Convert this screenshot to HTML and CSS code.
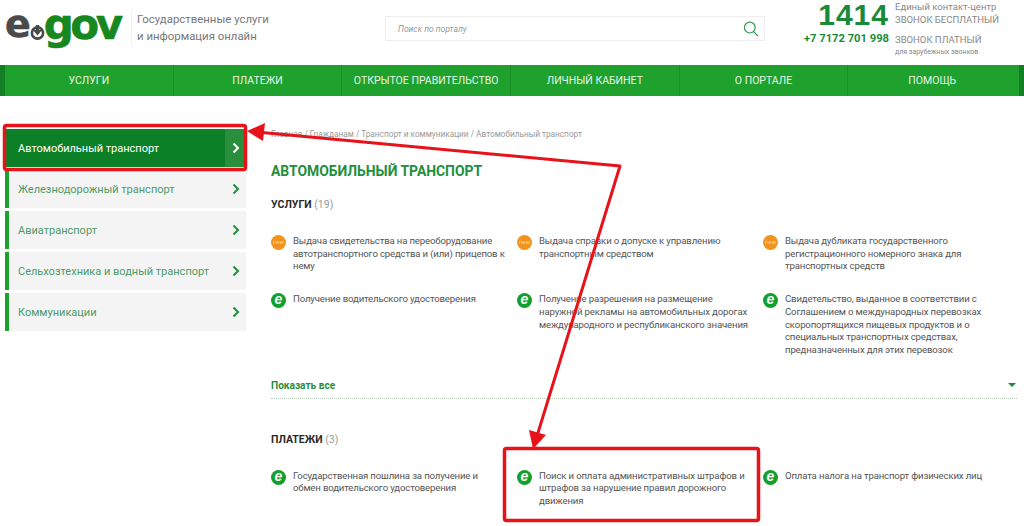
FILE: index.html
```html
<!DOCTYPE html>
<html lang="ru">
<head>
  <meta charset="UTF-8">
  <meta name="viewport" content="width=device-width, initial-scale=1.0">
  <title>eGov - Автомобильный транспорт</title>
  <link rel="stylesheet" href="styles.css">
</head>
<body>
  <header class="header">
    <a class="logo" href="#">
      <span class="logo-e">e</span>
      <svg class="logo-dot" width="15" height="15" viewBox="0 0 15 15">
        <circle cx="7.5" cy="8" r="5.6" fill="none" stroke="#4a4a4a" stroke-width="2.6"/>
        <path d="M5.800 0h3.400v5h2.800l-4.500 5.500L3 5h2.800z" fill="#4a4a4a"/>
      </svg>
      <span class="logo-gov">gov</span>
    </a>
    <div class="slogan">Государственные услуги<br>и информация онлайн</div>
    <form class="search">
      <span class="search-text">Поиск по порталу</span>
      <svg width="16" height="16" viewBox="0 0 16 16" fill="none" stroke="#2f9a4a" stroke-width="1.2">
        <circle cx="6.8" cy="6.6" r="5.4"/>
        <path d="M10.6 10.6l4.4 4.6"/>
      </svg>
    </form>
    <div class="contacts">
      <div class="phone-row">
        <span class="phone-big">1414</span>
        <span class="phone-note">Единый контакт-центр<br>ЗВОНОК БЕСПЛАТНЫЙ</span>
      </div>
      <div class="phone-row phone-row-2">
        <span class="phone-small">+7 7172 701 998</span>
        <span class="phone-note">ЗВОНОК ПЛАТНЫЙ<small>для зарубежных звонков</small></span>
      </div>
    </div>
  </header>

  <nav class="nav">
    <a href="#">Услуги</a>
    <a href="#">Платежи</a>
    <a href="#">Открытое правительство</a>
    <a href="#">Личный кабинет</a>
    <a href="#">О портале</a>
    <a href="#">Помощь</a>
  </nav>

  <div class="page">
    <aside class="sidebar">
      <a class="side-item active" href="#">
        <span>Автомобильный транспорт</span>
        <i class="side-arrow"><svg width="8" height="12" viewBox="0 0 8 12"><path d="M1.5 1.5L6 6l-4.500 4.500" fill="none" stroke="#fff" stroke-width="2"/></svg></i>
      </a>
      <a class="side-item" href="#">
        <span>Железнодорожный транспорт</span>
        <i class="side-arrow"><svg width="8" height="12" viewBox="0 0 8 12"><path d="M1.5 1.5L6 6l-4.500 4.500" fill="none" stroke="#1f8f3c" stroke-width="2"/></svg></i>
      </a>
      <a class="side-item" href="#">
        <span>Авиатранспорт</span>
        <i class="side-arrow"><svg width="8" height="12" viewBox="0 0 8 12"><path d="M1.5 1.5L6 6l-4.500 4.500" fill="none" stroke="#1f8f3c" stroke-width="2"/></svg></i>
      </a>
      <a class="side-item" href="#">
        <span>Сельхозтехника и водный транспорт</span>
        <i class="side-arrow"><svg width="8" height="12" viewBox="0 0 8 12"><path d="M1.5 1.5L6 6l-4.500 4.500" fill="none" stroke="#1f8f3c" stroke-width="2"/></svg></i>
      </a>
      <a class="side-item" href="#">
        <span>Коммуникации</span>
        <i class="side-arrow"><svg width="8" height="12" viewBox="0 0 8 12"><path d="M1.5 1.5L6 6l-4.500 4.500" fill="none" stroke="#1f8f3c" stroke-width="2"/></svg></i>
      </a>
    </aside>

    <main class="content">
      <div class="breadcrumbs">Главная / Гражданам / Транспорт и коммуникации / Автомобильный транспорт</div>
      <h1>Автомобильный транспорт</h1>

      <h2>Услуги <span>(19)</span></h2>
      <div class="services">
        <div class="service"><i class="badge badge-new">new</i><p>Выдача свидетельства на переоборудование автотранспортного средства и (или) прицепов к нему</p></div>
        <div class="service"><i class="badge badge-new">new</i><p>Выдача справки о допуске к управлению транспортным средством</p></div>
        <div class="service"><i class="badge badge-new">new</i><p>Выдача дубликата государственного регистрационного номерного знака для транспортных средств</p></div>
        <div class="service"><i class="badge">e</i><p>Получение водительского удостоверения</p></div>
        <div class="service"><i class="badge">e</i><p>Получение разрешения на размещение наружной рекламы на автомобильных дорогах международного и республиканского значения</p></div>
        <div class="service"><i class="badge">e</i><p>Свидетельство, выданное в соответствии с Соглашением о международных перевозках скоропортящихся пищевых продуктов и о специальных транспортных средствах, предназначенных для этих перевозок</p></div>
      </div>
      <div class="show-all"><a href="#">Показать все</a><b class="caret"></b></div>

      <h2 class="payments-title">Платежи <span>(3)</span></h2>
      <div class="services">
        <div class="service"><i class="badge">e</i><p>Государственная пошлина за получение и обмен водительского удостоверения</p></div>
        <div class="service"><i class="badge">e</i><p>Поиск и оплата административных штрафов и штрафов за нарушение правил дорожного движения</p></div>
        <div class="service"><i class="badge">e</i><p>Оплата налога на транспорт физических лиц</p></div>
      </div>
    </main>
  </div>

  <!-- red annotations drawn on top of the screenshot -->
  <svg class="marks" width="1024" height="526" viewBox="0 0 1024 526">
    <rect x="4.500" y="125.500" width="241" height="44" rx="2" fill="none" stroke="#e8121a" stroke-width="3.500"/>
    <rect x="504.500" y="448.500" width="254" height="72" rx="2" fill="none" stroke="#e8121a" stroke-width="3.500"/>
    <path d="M262 132.500L620 166L537 436" fill="none" stroke="#e8121a" stroke-width="3" stroke-linejoin="round"/>
    <path d="M247 131L265 123L263 141z" fill="#e8121a"/>
    <path d="M533 449L529 430L546 435z" fill="#e8121a"/>
  </svg>
</body>
</html>
```
FILE: styles.css
```css
* {
  margin: 0;
  padding: 0;
  box-sizing: border-box;
}

body {
  font-family: Roboto, "Noto Sans", sans-serif;
  width: 1024px;
  height: 526px;
  background: #fff;
  color: #444;
  overflow: hidden;
  position: relative;
}

a {
  text-decoration: none;
  color: inherit;
}

/* Header */
.header {
  height: 65px;
  display: flex;
  align-items: flex-start;
}

.logo {
  display: flex;
  align-items: flex-start;
  width: 126px;
  height: 50px;
  margin-left: 5px;
  position: relative;
}

.logo-e {
  font: bold 38px/49px "DejaVu Sans", sans-serif;
  color: #4a4a4a;
  -webkit-text-stroke: 0.6px #4a4a4a;
}

.logo-dot {
  margin: 25px 0 0 -1px;
  flex-shrink: 0;
}

.logo-gov {
  font: bold 42px/49px "DejaVu Sans", sans-serif;
  color: #17871f;
  letter-spacing: -3.500px;
  margin-left: -1px;
  -webkit-text-stroke: 0.6px #17871f;
}

.slogan {
  font-size: 11.400px;
  line-height: 17px;
  color: #777;
  margin-top: 11px;
  padding-left: 5px;
  border-left: 1px solid #f0f0f0;
  width: 254px;
}

.search {
  width: 380px;
  height: 25px;
  margin-top: 16px;
  border: 1px solid #eee;
  display: flex;
  align-items: center;
  justify-content: space-between;
  padding: 0 5px 0 12px;
}

.search-text {
  font-size: 8.500px;
  font-style: italic;
  color: #999;
}

.contacts {
  margin-left: 38px;
  width: 221px;
}

.phone-row {
  display: flex;
  justify-content: flex-start;
}

.phone-big {
  width: 86px;
  padding-left: 14px;
  text-align: right;
  font: bold 30px/29px "Liberation Sans", sans-serif;
  letter-spacing: 1px;
  color: #1a8a3a;
}

.phone-small {
  width: 86px;
  text-align: right;
  font-size: 11.200px;
  font-weight: 700;
  line-height: 14px;
  color: #1a8a3a;
  white-space: nowrap;
}

.phone-note {
  margin: 1px 0 0 6px;
  font-size: 9.500px;
  line-height: 12.500px;
  color: #888;
  white-space: nowrap;
}

.phone-note small {
  display: block;
  font-size: 7px;
  line-height: 10px;
}

.phone-row-2 {
  margin-top: 3px;
}

.phone-row-2 .phone-note {
  margin-top: 2px;
}

/* Main menu */
.nav {
  height: 31px;
  display: flex;
  padding: 0 8px 0 5px;
  background: #1fa12e;
  box-shadow: inset 5px 0 0 #137f24, inset -5px 0 0 #137f24;
}

.nav a {
  flex: 1;
  display: flex;
  align-items: center;
  justify-content: center;
  font-size: 10.500px;
  text-transform: uppercase;
  color: #e8f6e8;
  border-left: 1px solid #1a8f2a;
}

.nav a:first-child {
  border-left: 0;
}

/* Page columns */
.page {
  display: flex;
  padding: 33px 0 0 5px;
}

.sidebar {
  width: 241px;
  flex-shrink: 0;
  display: flex;
  flex-direction: column;
  gap: 3px;
}

.side-item {
  height: 38px;
  display: flex;
  align-items: center;
  justify-content: space-between;
  padding-left: 9px;
  background: #f4f4f4;
  border-left: 4px solid #1fa12e;
  font-size: 11px;
  color: #4f9a68;
}

.side-item.active {
  background: #0c8026;
  border-left-color: #0c8026;
  color: #fff;
}

.side-arrow {
  width: 21px;
  height: 100%;
  display: flex;
  align-items: center;
  justify-content: center;
}

.active .side-arrow {
  background: #2a8f3c;
}

.content {
  width: 746px;
  margin: -1px 0 0 25px;
}

.breadcrumbs {
  font-size: 8.250px;
  line-height: 12px;
  color: #999;
}

h1 {
  font-size: 13.900px;
  line-height: 18px;
  margin-top: 22px;
  font-weight: 700;
  text-transform: uppercase;
  color: #1f8f3c;
}

h2 {
  font-size: 10.500px;
  line-height: 14px;
  margin-top: 18px;
  font-weight: 700;
  text-transform: uppercase;
  color: #2a2a2a;
}

h2 span {
  font-weight: 400;
  color: #999;
}

.services {
  display: grid;
  grid-template-columns: repeat(3, 246px);
  margin-top: 23px;
}

.service {
  display: flex;
  gap: 7px;
  padding-right: 10px;
  margin-bottom: 20px;
}

.service p {
  font-size: 9.600px;
  letter-spacing: -0.150px;
  line-height: 12.700px;
  color: #555;
}

.badge {
  width: 15px;
  height: 15px;
  flex-shrink: 0;
  border-radius: 50%;
  background: #12a02c;
  color: #fff;
  font: italic bold 14px/13px "Liberation Sans", sans-serif;
  text-align: center;
}

.badge-new {
  background: #f2941c;
  font: 6px/15px "Liberation Sans", sans-serif;
  color: #fbd9a8;
}

.show-all {
  display: flex;
  justify-content: space-between;
  align-items: center;
  height: 22px;
  border-bottom: 1px dotted #b9c9b9;
  padding-bottom: 4px;
  font-size: 10.100px;
  font-weight: 700;
  color: #1f8f3c;
}

.caret {
  width: 0;
  height: 0;
  margin-right: 1px;
  border-style: solid;
  border-width: 4px 4px 0;
  border-color: #1a8a3a transparent transparent;
}

.payments-title {
  margin-top: 34px;
}

/* Red marks over the page */
.marks {
  position: absolute;
  top: 0;
  left: 0;
  pointer-events: none;
}
```
